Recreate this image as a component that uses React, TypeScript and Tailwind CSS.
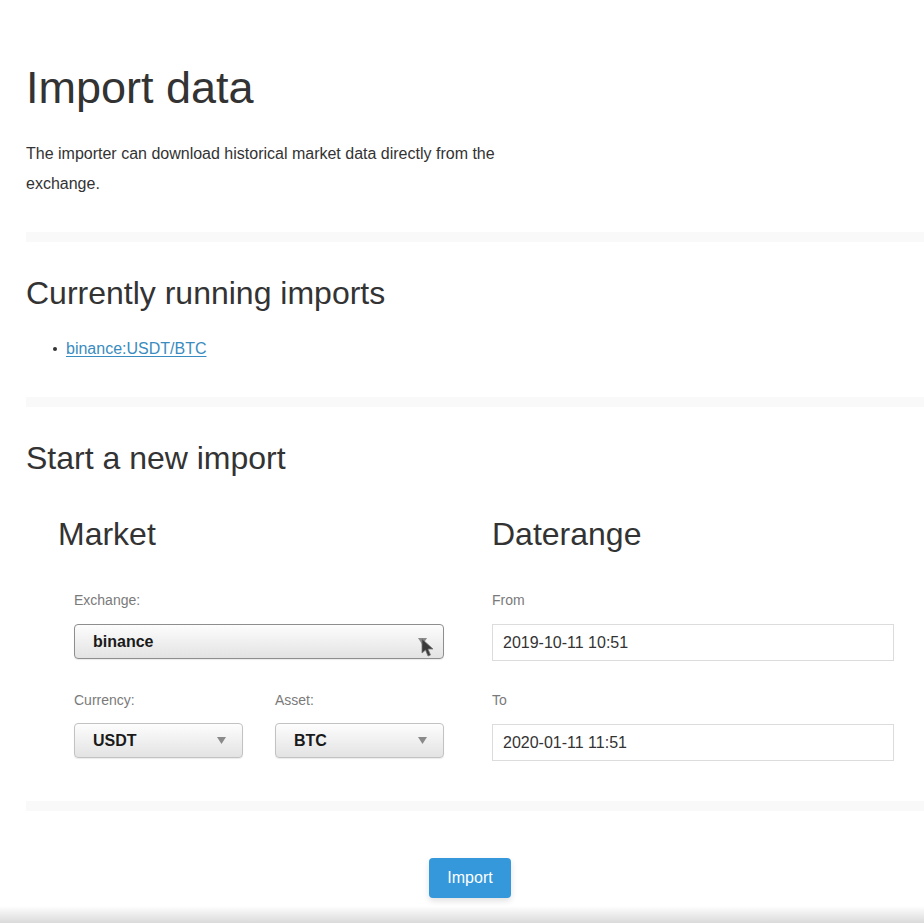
import React from "react";

function Arrow() {
  return (
    <svg width="9" height="7" viewBox="0 0 9 7" className="shrink-0">
      <path d="M0 0 H9 L4.5 7 Z" fill="#8a8a8a" />
    </svg>
  );
}

function Select({ value, dark, cursor }: { value: string; dark?: boolean; cursor?: boolean }) {
  return (
    <div
      className={`relative flex h-[35px] items-center justify-between rounded-[4px] border bg-gradient-to-b from-[#fdfdfd] to-[#e3e3e3] pl-[18px] pr-[16px] shadow-[0_1px_1px_rgba(0,0,0,0.08)] ${
        dark ? "border-[#8e8e8e]" : "border-[#c2c2c2]"
      }`}
    >
      <span className="text-[16px] font-bold text-[#1a1a1a]">{value}</span>
      <Arrow />
      {cursor && (
        <svg
          width="14"
          height="20"
          viewBox="0 0 14 20"
          className="absolute right-[8px] top-[13px]"
        >
          <path d="M1 1 L1 15 L4.5 12 L7 18 L9.5 17 L7 11 L12 11 Z" fill="#3a3a3a" stroke="#777" strokeWidth="0.8" />
        </svg>
      )}
    </div>
  );
}

function Label({ children }: { children: React.ReactNode }) {
  return <div className="h-[20px] text-[14px] leading-[20px] text-[#7a7a7a]">{children}</div>;
}

function Input({ value }: { value: string }) {
  return (
    <div className="flex h-[37px] items-center border border-[#dcdcdc] bg-white pl-[10px] text-[16px] text-[#333]">
      {value}
    </div>
  );
}

function Separator() {
  return <div className="ml-[26px] h-[10px] bg-[#f9f9f9]" />;
}

export default function App() {
  return (
    <div
      className="flex h-[923px] w-full flex-col overflow-hidden bg-white text-[#333]"
      style={{ fontFamily: '"Liberation Sans", Arial, sans-serif' }}
    >
      <div className="pl-[26px] pt-[63px]">
        <h1 className="text-[45px] leading-[50px] font-normal">Import data</h1>
        <p className="mt-[26px] w-[480px] text-[16px] leading-[30px]">
          The importer can download historical market data directly from the exchange.
        </p>
      </div>
      <div className="mt-[33px]">
        <Separator />
      </div>

      <div className="pl-[26px] pt-[33px]">
        <h2 className="text-[32px] leading-[36px] font-normal">Currently running imports</h2>
        <ul className="mt-[26px]">
          <li className="flex h-[24px] items-center text-[16px] leading-[24px]">
            <span className="ml-[27px] mr-[9px] h-[4px] w-[4px] rounded-full bg-[#333]" />
            <a href="#" className="text-[#3a8cc0] underline decoration-1 underline-offset-2">
              binance:USDT/BTC
            </a>
          </li>
        </ul>
      </div>
      <div className="mt-[36px]">
        <Separator />
      </div>

      <div className="pl-[26px] pt-[33px]">
        <h2 className="text-[32px] leading-[36px] font-normal">Start a new import</h2>
        <div className="mt-[40px] grid w-[868px] grid-cols-2">
          <div className="pl-[32px]">
            <h3 className="text-[32px] leading-[36px] font-normal">Market</h3>
            <div className="mt-[38px] pl-[16px] pr-[16px]">
              <Label>Exchange:</Label>
              <div className="mt-[14px]">
                <Select value="binance" dark cursor />
              </div>
              <div className="mt-[31px] grid grid-cols-2 gap-[32px]">
                <div>
                  <Label>Currency:</Label>
                  <div className="mt-[13px]">
                    <Select value="USDT" />
                  </div>
                </div>
                <div>
                  <Label>Asset:</Label>
                  <div className="mt-[13px]">
                    <Select value="BTC" />
                  </div>
                </div>
              </div>
            </div>
          </div>
          <div className="pl-[32px]">
            <h3 className="text-[32px] leading-[36px] font-normal">Daterange</h3>
            <div className="mt-[38px]">
              <Label>From</Label>
              <div className="mt-[14px]">
                <Input value="2019-10-11 10:51" />
              </div>
              <div className="mt-[29px]">
                <Label>To</Label>
              </div>
              <div className="mt-[14px]">
                <Input value="2020-01-11 11:51" />
              </div>
            </div>
          </div>
        </div>
      </div>
      <div className="mt-[40px]">
        <Separator />
      </div>

      <div className="flex justify-center pl-[16px] pt-[47px]">
        <button className="h-[40px] w-[82px] rounded-[4px] bg-[#3498db] text-[16px] text-white shadow-[0_3px_6px_rgba(0,0,0,0.12)]">
          Import
        </button>
      </div>

      <div className="mt-auto h-[17px] bg-gradient-to-b from-white to-[#dadada]" />
    </div>
  );
}
